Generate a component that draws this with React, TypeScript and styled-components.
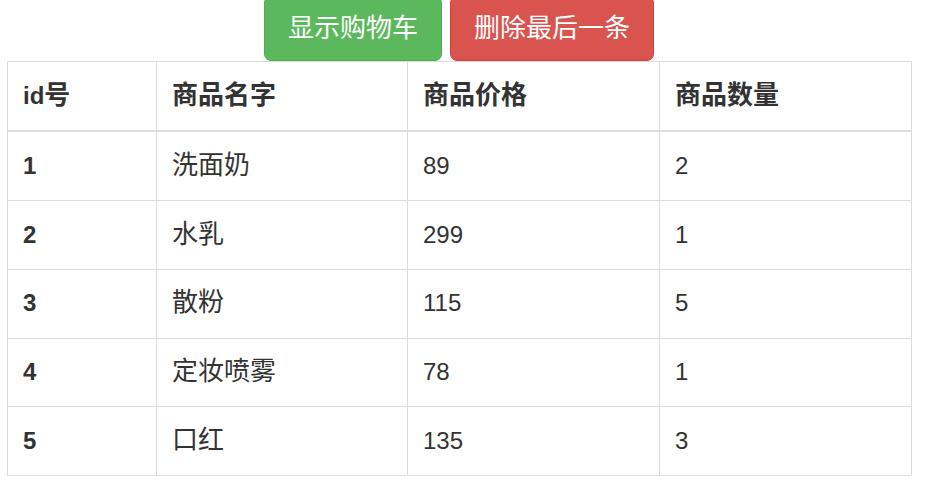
import React from "react";
import styled, { createGlobalStyle } from "styled-components";

const Global = createGlobalStyle`
  html, body { margin: 0; padding: 0; background: #fff; }
  body {
    font-family: "Liberation Sans", Arial, "Noto Sans CJK SC", sans-serif;
    font-size: 24px;
    color: #333;
  }
`;

const Page = styled.div`
  width: 904px;
  margin-left: 7px;
  display: flex;
  flex-direction: column;
`;

const Toolbar = styled.div`
  display: flex;
  justify-content: center;
  gap: 8px;
  margin-top: -4px;
`;

const Button = styled.button<{ $variant: "success" | "danger" }>`
  font-family: "Liberation Sans", Arial, "Noto Sans CJK SC", sans-serif;
  font-size: 24px;
  line-height: 35px;
  padding: 14px 23px;
  border-radius: 7px;
  color: #fff;
  cursor: pointer;
  background: ${(p) => (p.$variant === "success" ? "#5cb85c" : "#d9534f")};
  border: 1px solid ${(p) => (p.$variant === "success" ? "#4cae4c" : "#d43f3a")};
`;

const Han = styled.span`
  font-family: "Noto Sans CJK SC", sans-serif;
  font-size: 26px;
  line-height: 1;
`;

const Table = styled.table`
  width: 904px;
  border-collapse: collapse;
  table-layout: fixed;
  border: 1px solid #ddd;
`;

const Col = styled.col<{ $w: number }>`
  width: ${(p) => p.$w}px;
`;

const Th = styled.th`
  text-align: left;
  font-weight: bold;
  padding: 16.8px 15px;
  line-height: 34.3px;
  border: 1px solid #ddd;
  border-bottom: 2px solid #ddd;
  vertical-align: middle;
`;

const Td = styled.td<{ $strong?: boolean }>`
  padding: 16.8px 15px;
  line-height: 34.3px;
  border: 1px solid #ddd;
  font-weight: ${(p) => (p.$strong ? "bold" : "normal")};
  vertical-align: middle;
`;

const rows = [
  { id: 1, name: "洗面奶", price: 89, qty: 2 },
  { id: 2, name: "水乳", price: 299, qty: 1 },
  { id: 3, name: "散粉", price: 115, qty: 5 },
  { id: 4, name: "定妆喷雾", price: 78, qty: 1 },
  { id: 5, name: "口红", price: 135, qty: 3 },
];

export default function App() {
  return (
    <>
      <Global />
      <Page>
        <Toolbar>
          <Button $variant="success"><Han>显示购物车</Han></Button>
          <Button $variant="danger"><Han>删除最后一条</Han></Button>
        </Toolbar>
        <Table>
          <colgroup>
            <Col $w={149} />
            <Col $w={251} />
            <Col $w={252} />
            <Col $w={252} />
          </colgroup>
          <thead>
            <tr>
              <Th>id<Han>号</Han></Th>
              <Th><Han>商品名字</Han></Th>
              <Th><Han>商品价格</Han></Th>
              <Th><Han>商品数量</Han></Th>
            </tr>
          </thead>
          <tbody>
            {rows.map((r) => (
              <tr key={r.id}>
                <Td $strong>{r.id}</Td>
                <Td><Han>{r.name}</Han></Td>
                <Td>{r.price}</Td>
                <Td>{r.qty}</Td>
              </tr>
            ))}
          </tbody>
        </Table>
      </Page>
    </>
  );
}
